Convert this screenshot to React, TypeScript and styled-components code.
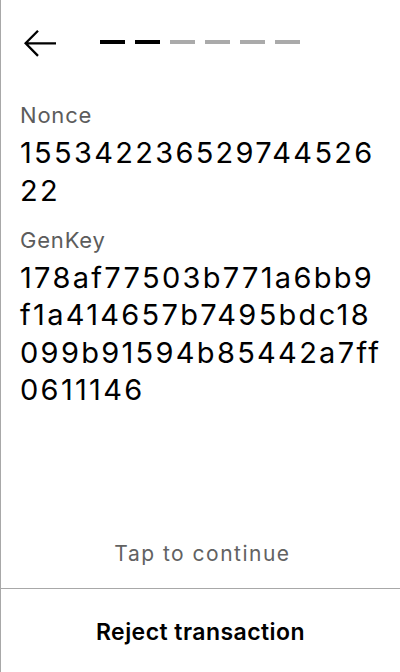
import React from "react";
import styled, { createGlobalStyle } from "styled-components";

const Global = createGlobalStyle`
  html, body { margin: 0; padding: 0; background: #fff; }
  body { font-family: Inter, "Noto Sans", sans-serif; }
  * { box-sizing: border-box; }
`;

const Screen = styled.div`
  width: 400px;
  height: 672px;
  display: flex;
  flex-direction: column;
  border-left: 1px solid #a8a8a8;
  background: #fff;
  color: #000;
  overflow: hidden;
`;

const Header = styled.div`
  height: 86px;
  flex: none;
  display: flex;
  align-items: center;
  padding: 0 0 0 23px;
  gap: 42px;
`;

const BackButton = styled.button`
  border: none;
  background: none;
  padding: 0;
  width: 34px;
  height: 28px;
  display: flex;
  align-items: center;
  cursor: pointer;
`;

const Steps = styled.div`
  display: flex;
  gap: 10px;
  margin-bottom: 2px;
`;

const Step = styled.div<{ $active: boolean }>`
  width: 25px;
  height: 4px;
  background: ${(p) => (p.$active ? "#000" : "#aaaaaa")};
`;

const Content = styled.div`
  flex: 1;
  padding: 15px 10px 0 19px;
  display: flex;
  flex-direction: column;
  gap: 16.5px;
`;

const Field = styled.div`
  display: flex;
  flex-direction: column;
  gap: 5px;
`;

const Label = styled.div`
  font-size: 22px;
  line-height: 28px;
  letter-spacing: 0.8px;
  color: #5c5c5c;
`;

const Value = styled.div`
  display: flex;
  flex-direction: column;
  font-size: 29px;
  line-height: 37.5px;
  letter-spacing: 2.3px;
  color: #000;
`;

const ValueLine = styled.span`
  white-space: nowrap;
`;

const Hint = styled.div`
  flex: none;
  text-align: center;
  font-size: 21px;
  line-height: 26px;
  letter-spacing: 1.5px;
  color: #626262;
  padding: 0 0 21px 4px;
`;

const Footer = styled.button`
  flex: none;
  height: 84px;
  width: 100%;
  padding: 2px 0 0 0;
  border: none;
  border-top: 1px solid #a8a8a8;
  background: #fff;
  font-family: Inter, sans-serif;
  font-size: 23px;
  font-weight: 600;
  letter-spacing: 0.45px;
  color: #000;
  cursor: pointer;
`;

const BackArrow = () => (
  <svg width="34" height="28" viewBox="0 0 34 28" fill="none">
    <path
      d="M32 14.3H1.6M14 1.7L1.6 14.3L14 26.9"
      stroke="#000"
      strokeWidth="2.3"
    />
  </svg>
);

const chunk = (s: string, n: number) => {
  const out: string[] = [];
  for (let i = 0; i < s.length; i += n) out.push(s.slice(i, i + n));
  return out;
};

const fields = [
  { label: "Nonce", value: "15534223652974452622", perLine: 18 },
  {
    label: "GenKey",
    value: "178af77503b771a6bb9f1a414657b7495bdc18099b91594b85442a7ff0611146",
    perLine: 19,
  },
];

export default function App() {
  const steps = [true, true, false, false, false, false];
  return (
    <>
      <Global />
      <Screen>
        <Header>
          <BackButton aria-label="Back">
            <BackArrow />
          </BackButton>
          <Steps>
            {steps.map((a, i) => (
              <Step key={i} $active={a} />
            ))}
          </Steps>
        </Header>
        <Content>
          {fields.map((f) => (
            <Field key={f.label}>
              <Label>{f.label}</Label>
              <Value>
                {chunk(f.value, f.perLine).map((line, i) => (
                  <ValueLine key={i}>{line}</ValueLine>
                ))}
              </Value>
            </Field>
          ))}
        </Content>
        <Hint>Tap to continue</Hint>
        <Footer>Reject transaction</Footer>
      </Screen>
    </>
  );
}
